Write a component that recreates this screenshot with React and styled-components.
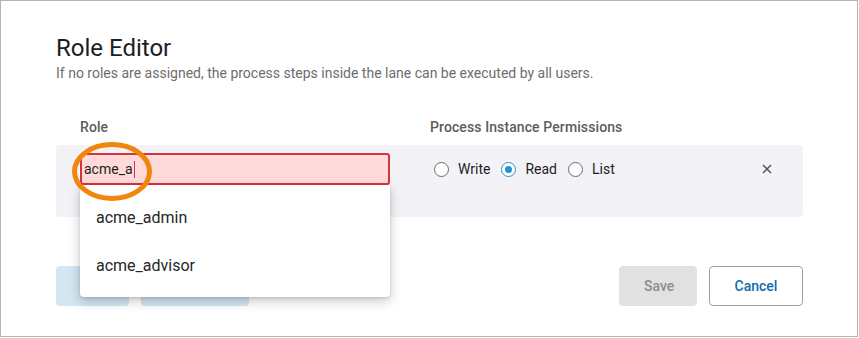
import React from 'react'
import styled, { createGlobalStyle } from 'styled-components'

const GlobalStyle = createGlobalStyle`
  body {
    margin: 0;
    font-family: Roboto, "Noto Sans", sans-serif;
    background: #fff;
  }
`

const Frame = styled.div`
  box-sizing: border-box;
  width: 858px;
  height: 337px;
  border: 1px solid #b4b4b4;
  padding: 33px 54px 0 55px;
  display: flex;
  flex-direction: column;
`

const Title = styled.h1`
  margin: 0;
  font-size: 24px;
  line-height: 28px;
  font-weight: 400;
  color: #1e1e1e;
`

const Subtitle = styled.p`
  margin: 1px 0 0;
  font-size: 14px;
  line-height: 20px;
  color: #6d6d6d;
`

const Grid = styled.div`
  display: grid;
  grid-template-columns: 310px 1fr 24px;
  column-gap: 40px;
  align-items: center;
  padding: 0 24px;
`

const HeaderRow = styled(Grid)`
  margin-top: 34px;
  font-size: 14px;
  line-height: 20px;
  font-weight: 500;
  letter-spacing: 0.1px;
  color: #5c5c5c;
`

const LaneRow = styled(Grid)`
  margin-top: 8px;
  background: #f2f2f7;
  border-radius: 4px;
  padding-top: 8px;
  padding-bottom: 32px;
  align-items: start;
`

const RoleCell = styled.div`
  position: relative;
`

const Input = styled.div`
  box-sizing: border-box;
  height: 32px;
  border: 2px solid #d7343d;
  border-radius: 3px;
  background: #ffdada;
  display: flex;
  align-items: center;
  padding-left: 2px;
  font-size: 14px;
  color: #1e1e1e;
`

const Caret = styled.span`
  display: inline-block;
  width: 1px;
  height: 17px;
  margin-left: 1px;
  background: #d7343d;
`

const Dropdown = styled.ul`
  position: absolute;
  left: 0;
  right: 0;
  top: 32px;
  margin: 0;
  padding: 8px 0;
  list-style: none;
  background: #fff;
  border-radius: 0 0 4px 4px;
  box-shadow: 0 4px 12px rgba(0, 0, 0, 0.22), 0 1px 3px rgba(0, 0, 0, 0.12);
  z-index: 5;
`

const Option = styled.li`
  height: 48px;
  display: flex;
  align-items: center;
  padding-left: 16px;
  font-size: 16px;
  color: #262626;
`

const Highlight = styled.svg`
  position: absolute;
  left: -9px;
  top: -12px;
  z-index: 6;
  pointer-events: none;
`

const RadioGroup = styled.div`
  display: flex;
  align-items: center;
  height: 32px;
  padding-left: 4px;
`

const RadioLabel = styled.label`
  display: flex;
  align-items: center;
  gap: 9px;
  margin-right: 11px;
  font-size: 14px;
  color: #1e1e1e;
`

const RadioDot = styled.span`
  box-sizing: border-box;
  width: 15px;
  height: 15px;
  border-radius: 50%;
  border: 1.5px solid ${p => p.checked ? '#2a8fcf' : '#6b6b6b'};
  background: #fff;
  display: flex;
  align-items: center;
  justify-content: center;

  &::after {
    content: '';
    display: ${p => p.checked ? 'block' : 'none'};
    width: 7px;
    height: 7px;
    border-radius: 50%;
    background: #2a8fcf;
  }
`

const CloseButton = styled.button`
  height: 32px;
  width: 24px;
  padding: 0;
  border: none;
  background: none;
  display: flex;
  align-items: center;
  justify-content: center;
`

const Footer = styled.div`
  margin-top: 49px;
  display: flex;
  align-items: center;
  gap: 12px;
`

const Ghost = styled.div`
  width: ${p => p.w}px;
  height: 40px;
  border-radius: 4px;
  background: #d3e6f1;
`

const Spacer = styled.div`
  flex: 1;
`

const Button = styled.button`
  box-sizing: border-box;
  height: 40px;
  padding: 0 24px;
  border-radius: 4px;
  font-family: inherit;
  font-size: 14px;
  font-weight: 500;
  border: 1px solid ${p => p.primary ? '#e1e1e1' : '#9e9e9e'};
  background: ${p => p.primary ? '#e1e1e1' : '#fff'};
  color: ${p => p.primary ? '#8d8d8d' : '#0f6cad'};
  width: ${p => p.w}px;
`

const Radio = ({ label, checked }) => (
  <RadioLabel>
    <RadioDot checked={checked} />
    {label}
  </RadioLabel>
)

export default function App() {
  return (
    <>
      <GlobalStyle />
      <Frame>
        <Title>Role Editor</Title>
        <Subtitle>If no roles are assigned, the process steps inside the lane can be executed by all users.</Subtitle>

        <HeaderRow>
          <div>Role</div>
          <div>Process Instance Permissions</div>
          <div />
        </HeaderRow>

        <LaneRow>
          <RoleCell>
            <Input>acme_a<Caret /></Input>
            <Dropdown>
              <Option>acme_admin</Option>
              <Option>acme_advisor</Option>
            </Dropdown>
            <Highlight width="82" height="62" viewBox="0 0 82 62">
              <ellipse cx="41" cy="30.5" rx="37.5" ry="27" fill="none" stroke="#f0860b" strokeWidth="5" />
            </Highlight>
          </RoleCell>
          <RadioGroup>
            <Radio label="Write" />
            <Radio label="Read" checked />
            <Radio label="List" />
          </RadioGroup>
          <CloseButton aria-label="Remove">
            <svg width="10" height="10" viewBox="0 0 10 10">
              <path d="M1 1 L9 9 M9 1 L1 9" stroke="#555" strokeWidth="1.5" />
            </svg>
          </CloseButton>
        </LaneRow>

        <Footer>
          <Ghost w={73} />
          <Ghost w={108} />
          <Spacer />
          <Button primary w={78}>Save</Button>
          <Button w={94}>Cancel</Button>
        </Footer>
      </Frame>
    </>
  )
}
